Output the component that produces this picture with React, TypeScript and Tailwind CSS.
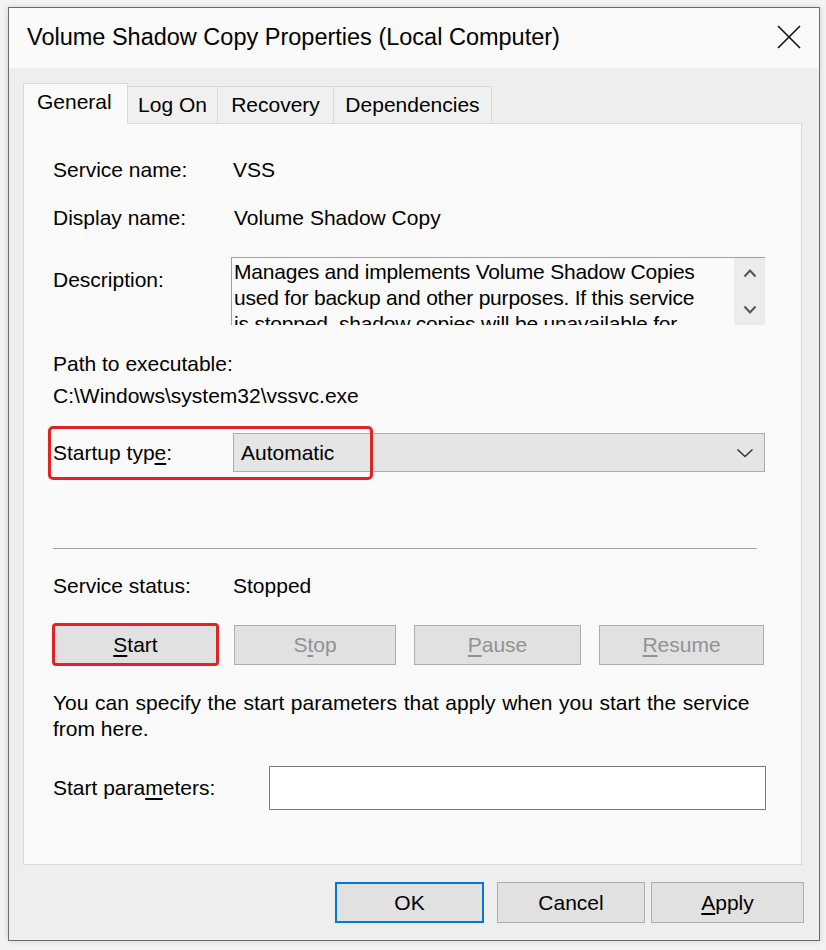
import React from "react";

const font = { fontFamily: '"Liberation Sans", Arial, sans-serif' };

function Btn({
  children,
  w,
  disabled,
  className = "",
}: {
  children: React.ReactNode;
  w: string;
  disabled?: boolean;
  className?: string;
}) {
  return (
    <div
      className={`${w} h-[40px] flex items-center justify-center bg-[#e1e1e1] border border-[#adadad] text-[21px] ${
        disabled ? "text-[#929292]" : "text-black"
      } ${className}`}
    >
      {children}
    </div>
  );
}

export default function App() {
  return (
    <div className="w-[826px] h-[950px] bg-[#f3f3f3] pt-[7px] pl-[8px]" style={font}>
      <div className="w-[812px] h-[934px] border border-[#6b6b6b] bg-[#eeeeee] flex flex-col shadow-[0_0_6px_rgba(0,0,0,0.15)]">
        {/* Title bar */}
        <div className="h-[60px] bg-[#fafafa] flex items-center justify-between pl-[18px] pr-[18px] shrink-0">
          <span className="text-[23.5px] text-black">
            Volume Shadow Copy Properties (Local Computer)
          </span>
          <svg width="24" height="24" viewBox="0 0 24 24" className="mt-[-2px]">
            <path d="M1 1 L23 23 M23 1 L1 23" stroke="#111" strokeWidth="1.6" fill="none" />
          </svg>
        </div>

        {/* Tabs */}
        <div className="pl-[14px] pt-[15px] flex items-end h-[55px] shrink-0 text-[21px]">
          <div className="w-[105px] h-[41px] bg-[#fafafa] border border-[#d9d9d9] border-b-0 flex items-center pl-[13px] relative z-10 mb-[-1px] pb-[4px]">
            General
          </div>
          <div className="w-[90px] h-[37px] bg-[#f0f0f0] border border-[#d9d9d9] border-l-0 border-b-0 flex items-center justify-center">
            Log On
          </div>
          <div className="w-[116px] h-[37px] bg-[#f0f0f0] border border-[#d9d9d9] border-l-0 border-b-0 flex items-center justify-center">
            Recovery
          </div>
          <div className="w-[158px] h-[37px] bg-[#f0f0f0] border border-[#d9d9d9] border-l-0 border-b-0 flex items-center justify-center">
            Dependencies
          </div>
        </div>

        {/* Panel */}
        <div className="ml-[14px] w-[779px] h-[742px] bg-[#fafafa] border border-[#d9d9d9] pl-[29px] text-[21px] text-black flex flex-col shrink-0">
          <div className="mt-[32px] h-[28px] flex items-center">
            <span className="w-[180px]">Service name:</span>
            <span>VSS</span>
          </div>
          <div className="mt-[20px] h-[28px] flex items-center">
            <span className="w-[181px]">Display name:</span>
            <span>Volume Shadow Copy</span>
          </div>
          <div className="mt-[25px] flex">
            <span className="w-[178px] mt-[9px] h-[28px] flex items-center">Description:</span>
            <div className="w-[534px] h-[68px] border-t border-l border-[#a0a0a0] bg-[#fafafa] flex overflow-hidden">
              <div className="flex-1 pl-[2px] pr-[28px] leading-[26px] pt-[1px] overflow-hidden tracking-[-0.2px]">
                Manages and implements Volume Shadow Copies used for backup and other purposes. If this service is stopped, shadow copies will be unavailable for backup and the backup may fail.
              </div>
              <div className="w-[31px] bg-[#ececec] flex flex-col items-center justify-between pt-[10px] pb-[10px] shrink-0">
                <svg width="14" height="10" viewBox="0 0 14 10">
                  <path d="M1.5 8.5 L7 2.5 L12.5 8.5" stroke="#555" strokeWidth="2" fill="none" />
                </svg>
                <svg width="14" height="10" viewBox="0 0 14 10">
                  <path d="M1.5 1.5 L7 7.5 L12.5 1.5" stroke="#555" strokeWidth="2" fill="none" />
                </svg>
              </div>
            </div>
          </div>
          <div className="mt-[25px] h-[28px] flex items-center">Path to executable:</div>
          <div className="mt-[4px] h-[28px] flex items-center">C:\Windows\system32\vssvc.exe</div>
          <div className="mt-[23px] flex items-center relative">
            <span className="w-[180px]">
              Startup typ<u className="underline underline-offset-[3px]">e</u>:
            </span>
            <div className="w-[532px] h-[39px] bg-[#e5e5e5] border border-[#adadad] flex items-center justify-between pl-[7px] pr-[10px]">
              <span>Automatic</span>
              <svg width="18" height="10" viewBox="0 0 18 10">
                <path d="M1.5 1.5 L9 8.5 L16.5 1.5" stroke="#333" strokeWidth="1.4" fill="none" />
              </svg>
            </div>
            <div className="absolute left-[-5px] top-[-7px] w-[325px] h-[54px] border-[3px] border-[#e02424] rounded-[5px] pointer-events-none" />
          </div>
          <div className="mt-[76px] w-[704px] h-px bg-[#a0a0a0]" />
          <div className="mt-[23px] h-[28px] flex items-center">
            <span className="w-[180px]">Service status:</span>
            <span>Stopped</span>
          </div>
          <div className="mt-[23px] flex items-center">
            <Btn w="w-[167px]" className="ml-[-1px] border-[3px] !border-[#e02424] rounded-[4px] h-[43px]">
              <u className="underline underline-offset-[3px]">S</u>tart
            </Btn>
            <Btn w="w-[162px]" disabled className="ml-[15px]">
              S<u className="underline underline-offset-[3px]">t</u>op
            </Btn>
            <Btn w="w-[167px]" disabled className="ml-[18px]">
              <u className="underline underline-offset-[3px]">P</u>ause
            </Btn>
            <Btn w="w-[165px]" disabled className="ml-[18px]">
              <u className="underline underline-offset-[3px]">R</u>esume
            </Btn>
          </div>
          <div className="mt-[24px] leading-[26px] w-[720px]">
            <span className="[word-spacing:0.8px]">
              You can specify the start parameters that apply when you start the service
            </span>
            <br />
            from here.
          </div>
          <div className="mt-[24px] flex items-center">
            <span className="w-[216px]">
              Start para<u className="underline underline-offset-[3px]">m</u>eters:
            </span>
            <div className="w-[497px] h-[44px] bg-white border border-[#7a7a7a]" />
          </div>
        </div>

        {/* Bottom buttons */}
        <div className="mt-[17px] flex pl-[326px] text-[21px]">
          <div className="w-[149px] h-[41px] bg-[#e1e1e1] border-2 border-[#0078d7] flex items-center justify-center">
            OK
          </div>
          <div className="ml-[13px] w-[148px] h-[41px] bg-[#e1e1e1] border border-[#adadad] flex items-center justify-center">
            Cancel
          </div>
          <div className="ml-[6px] w-[153px] h-[41px] bg-[#e1e1e1] border border-[#adadad] flex items-center justify-center">
            <u className="underline underline-offset-[3px]">A</u>pply
          </div>
        </div>
      </div>
    </div>
  );
}
